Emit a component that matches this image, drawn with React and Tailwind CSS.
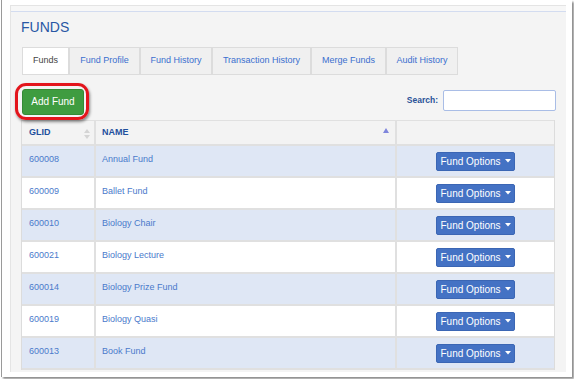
import React from "react";

const tabs = [
  { label: "Funds", w: "w-[47px]", active: true },
  { label: "Fund Profile", w: "w-[71px]" },
  { label: "Fund History", w: "w-[72px]" },
  { label: "Transaction History", w: "w-[99px]" },
  { label: "Merge Funds", w: "w-[75px]" },
  { label: "Audit History", w: "w-[72px]" },
];

const funds = [
  { id: "600008", name: "Annual Fund" },
  { id: "600009", name: "Ballet Fund" },
  { id: "600010", name: "Biology Chair" },
  { id: "600021", name: "Biology Lecture" },
  { id: "600014", name: "Biology Prize Fund" },
  { id: "600019", name: "Biology Quasi" },
  { id: "600013", name: "Book Fund" },
];

const App = () => {
  return (
    <div className="w-[574px] h-[379px] bg-white overflow-hidden font-['Liberation_Sans',Arial,sans-serif]">
      {/* FRAME */}
      <div className="ml-[1px] w-[571px] h-[377px] bg-white border-l border-[#9a9a9a] shadow-[2px_2px_2px_rgba(0,0,0,0.45)] pl-[8px] pr-[5px] pt-[5px]">

        {/* PANEL */}
        <div className="w-[556px] h-[367px] bg-[#f4f4f4] border-l border-t border-[#e4e4e4] overflow-hidden">
          <div className="h-[6px] bg-[#f7f7f7] border-b border-[#d3dcf0]" />

          <div className="px-[10px]">
            {/* TITLE */}
            <h1 className="mt-[7px] text-[14px] leading-[16px] text-[#2857a4]">
              FUNDS
            </h1>

            {/* TABS */}
            <div className="flex ml-[1px] mt-[12px]">
              {tabs.map((t) => (
                <div
                  key={t.label}
                  className={`${t.w} h-[28px] flex items-center justify-center border border-[#dcdcdc] text-[9px] ${
                    t.active
                      ? "bg-white text-[#444]"
                      : "bg-[#f0f0f0] text-[#3a6fcf]"
                  }`}
                >
                  {t.label}
                </div>
              ))}
            </div>

            {/* ACTION ROW */}
            <div className="flex items-start justify-between mt-[13px] h-[32px]">
              <div className="relative ml-[1px]">
                <span className="absolute -left-[7px] -top-[5px] -right-[5px] -bottom-[5px] rounded-[11px] border-[3px] border-[#e3151c] shadow-[1px_2px_3px_rgba(0,0,0,0.45)]" />
                <button className="relative w-[62px] h-[26px] bg-[#3f9c40] border border-[#348a35] rounded-[3px] text-white text-[10px]">
                  Add Fund
                </button>
              </div>

              <div className="flex items-center gap-[5px] mt-[2px]">
                <span className="text-[8.5px] font-bold text-[#2a5298]">
                  Search:
                </span>
                <input
                  type="text"
                  className="w-[113px] h-[21px] bg-white border border-[#a9bde6] rounded-[2px]"
                />
              </div>
            </div>

            {/* TABLE */}
            <div className="w-[534px] border-l border-r border-[#dcdcdc]">
              {/* HEADER */}
              <div className="grid grid-cols-[74px_301px_157px] h-[26px] bg-[#f3f3f3] border-t border-b-2 border-[#e0e0e0]">
                <div className="relative flex items-center pl-[7px] border-r-2 border-[#e0e0e0] text-[9px] font-bold text-[#1f4f9d]">
                  GLID
                  <svg className="absolute right-[4px] top-[8px]" width="6" height="10" viewBox="0 0 6 10">
                    <path d="M3 0 L6 4 L0 4 Z" fill="#d4d4d4" />
                    <path d="M3 10 L6 6 L0 6 Z" fill="#d4d4d4" />
                  </svg>
                </div>
                <div className="relative flex items-center pl-[6px] border-r-2 border-[#e0e0e0] text-[9px] font-bold text-[#1f4f9d]">
                  NAME
                  <svg className="absolute right-[6px] top-[7px]" width="6" height="5" viewBox="0 0 6 5">
                    <path d="M3 0 L6 5 L0 5 Z" fill="#7f86dc" />
                  </svg>
                </div>
                <div />
              </div>

              {/* ROWS */}
              {funds.map((f, i) => (
                <div
                  key={f.id}
                  className={`grid grid-cols-[74px_301px_157px] h-[32px] border-b-2 border-[#e0e0e0] ${
                    i % 2 === 0 ? "bg-[#dfe7f5]" : "bg-white"
                  }`}
                >
                  <div className="pl-[7px] pt-[8px] text-[9px] leading-[11px] text-[#4a7acb] border-r-2 border-[#e0e0e0]">
                    {f.id}
                  </div>
                  <div className="pl-[6px] pt-[8px] text-[9px] leading-[11px] text-[#4a7acb] border-r-2 border-[#e0e0e0]">
                    {f.name}
                  </div>
                  <div className="flex items-center justify-center">
                    <button className="w-[79px] h-[19px] flex items-center justify-center gap-[4px] bg-[#4472c4] border border-[#3b66b4] rounded-[2px] text-white text-[10px]">
                      Fund Options
                      <svg width="6" height="4" viewBox="0 0 6 4">
                        <path d="M0 0 L6 0 L3 3.5 Z" fill="white" />
                      </svg>
                    </button>
                  </div>
                </div>
              ))}
            </div>
          </div>
        </div>
      </div>
    </div>
  );
};

export default App;
